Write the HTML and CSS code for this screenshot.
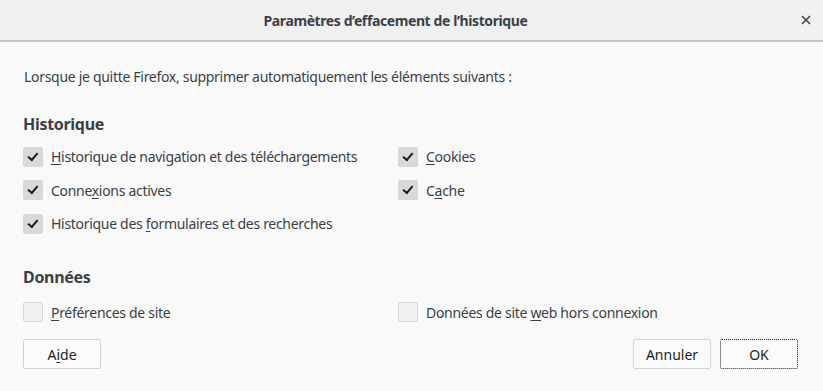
FILE: index.html
```
<!DOCTYPE html>
<html lang="fr">
<head>
    <meta charset="UTF-8">
    <title>Paramètres d'effacement de l'historique</title>
    <link rel="stylesheet" href="styles.css">
</head>
<body>
    <header class="titlebar">
        <span class="title">Paramètres d’effacement de l’historique</span>
        <span class="close" aria-label="Fermer">
            <svg width="10" height="10" viewBox="0 0 10 10"><path d="M1 1 L9 9 M9 1 L1 9" stroke="#3c4650" stroke-width="1.6" /></svg>
        </span>
    </header>
    <main class="content">
        <p class="intro">Lorsque je quitte Firefox, supprimer automatiquement les éléments suivants :</p>

        <h2 class="group_title">Historique</h2>
        <div class="options">
            <label class="option"><span class="box checked"></span><span><u>H</u>istorique de navigation et des téléchargements</span></label>
            <label class="option"><span class="box checked"></span><span><u>C</u>ookies</span></label>
            <label class="option"><span class="box checked"></span><span>Conne<u>x</u>ions actives</span></label>
            <label class="option"><span class="box checked"></span><span>C<u>a</u>che</span></label>
            <label class="option"><span class="box checked"></span><span>Historique des <u>f</u>ormulaires et des recherches</span></label>
        </div>

        <h2 class="group_title data">Données</h2>
        <div class="options data_opts">
            <label class="option"><span class="box"></span><span><u>P</u>références de site</span></label>
            <label class="option"><span class="box"></span><span>Données de site <u>w</u>eb hors connexion</span></label>
        </div>

        <footer class="actions">
            <button class="btn">A<u>i</u>de</button>
            <div class="right_btns">
                <button class="btn">Annuler</button>
                <button class="btn focused">OK</button>
            </div>
        </footer>
    </main>
</body>
</html>
```
FILE: styles.css
```
* {
    box-sizing: border-box;
}

body {
    margin: 0;
    background: #f9f9fa;
    color: #3b3f46;
    font-family: 'Noto Sans', 'Open Sans', sans-serif;
    font-size: 14px;
    letter-spacing: -0.3px;
}

.titlebar {
    height: 42px;
    background: #f0f0f0;
    border-bottom: 2px solid #c4c4c4;
    display: flex;
    align-items: center;
    justify-content: center;
    padding-right: 32px;
    position: relative;
}

.title {
    font-weight: bold;
    font-size: 14px;
    letter-spacing: -0.4px;
    color: #3c4048;
}

.close {
    position: absolute;
    right: 12px;
    top: 15px;
    display: flex;
}

.content {
    padding: 0 23px 0 23px;
}

.intro {
    margin: 25px 0 0 1px;
    line-height: 20px;
}

.group_title {
    font-size: 16px;
    font-weight: bold;
    margin: 26px 0 0 0;
    line-height: 22px;
    color: #3b3f46;
}

.group_title.data {
    margin-top: 25px;
}

.options {
    display: grid;
    grid-template-columns: 375px 1fr;
    margin-top: 5px;
}

.options.data_opts {
    margin-top: 8px;
}

.option {
    display: flex;
    align-items: center;
    gap: 8px;
    height: 33.5px;
}

.box {
    width: 20px;
    height: 20px;
    border-radius: 2px;
    border: 1px solid #d8d8d8;
    background: #f0f0f0;
    display: flex;
    align-items: center;
    justify-content: center;
}

.box.checked {
    background: #d9d9d9;
}

.box.checked::after {
    content: "";
    width: 8px;
    height: 4px;
    border-left: 2px solid #1b1b1b;
    border-bottom: 2px solid #1b1b1b;
    transform: rotate(-50deg) translate(1px, -1px);
}

u {
    text-decoration-thickness: 1px;
    text-underline-offset: 2px;
}

.actions {
    display: flex;
    justify-content: space-between;
    margin-top: 10px;
}

.right_btns {
    display: flex;
    gap: 9px;
    margin-right: 2px;
}

.btn {
    width: 78px;
    height: 30px;
    background: #fbfbfb;
    border: 1px solid #d2d2d2;
    border-radius: 2px;
    font: inherit;
    color: #1e1e1e;
}

.btn.focused {
    outline: 1px dotted #222;
    outline-offset: -1px;
    border-color: #f9f9fa;
}
```
